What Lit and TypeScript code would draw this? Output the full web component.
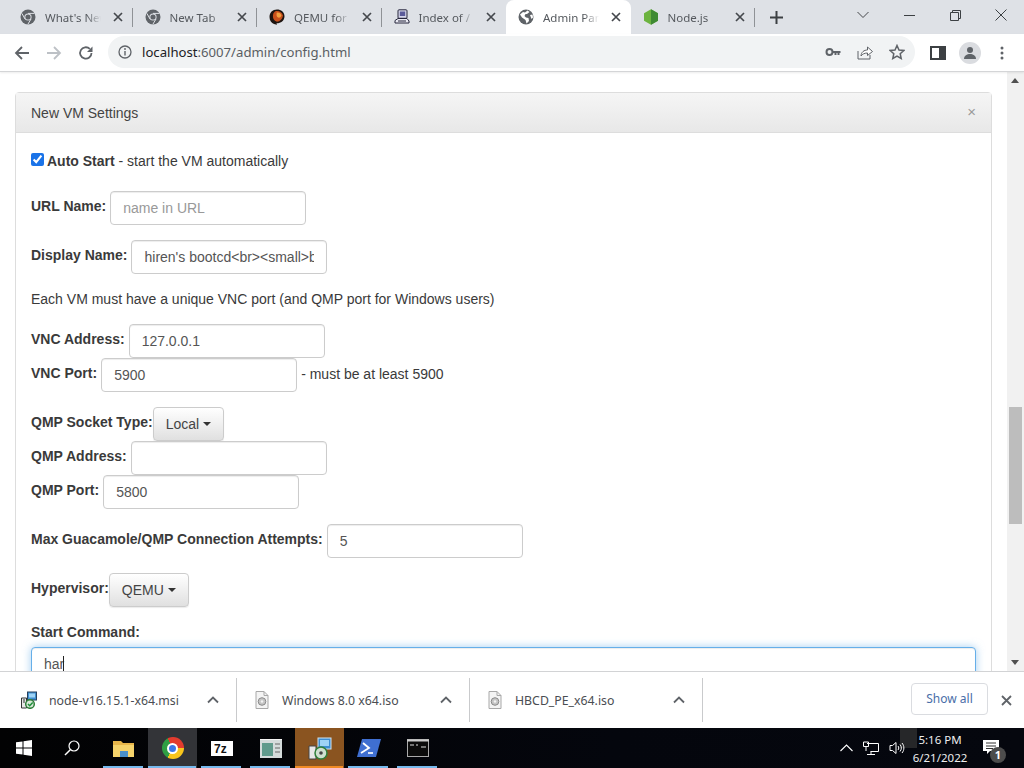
import { LitElement, html, css } from "lit";
import { customElement } from "lit/decorators.js";

const chromeGray = html`<svg class="fav" viewBox="0 0 16 16"><circle cx="8" cy="8" r="7.5" fill="#5f6368"/><path d="M8 4.4h6.4M5 10 1.9 4.4M11 10l-3.2 5.4" stroke="#dee1e6" stroke-width="1"/><circle cx="8" cy="8" r="3.6" fill="#dee1e6"/><circle cx="8" cy="8" r="2.6" fill="#5f6368"/></svg>`;
const qemu = html`<svg class="fav" viewBox="0 0 16 16"><path d="M8 .5C3.500.5.500 3.500.500 8c0 3.500 2 6 4.500 7l3 .8-.5-1.500c4 .2 8-2.500 8-7C15.500 3 12 .5 8 .5z" fill="#1d1410"/><path d="M7 2c3-.5 6 1 7 4.500-.5 3.500-3 6-6 6.200C5 12 3.500 9 4 6c.3-2 1.500-3.500 3-4z" fill="#c8501c"/><path d="M8 3.500c2-.2 4 1 4.500 3-.5 1.500-2 2.500-3.500 2C7.500 8 7 5 8 3.500z" fill="#f0a040"/></svg>`;
const indexIcon = html`<svg class="fav" viewBox="0 0 16 16"><rect x="4" y=".8" width="9" height="8.500" rx="1" fill="#d6d6ea" stroke="#26263c"/><rect x="5.800" y="2.500" width="5.400" height="4.500" fill="#5a5a9a"/><path d="M1 11.500 4 9.500h9l2 2.500v2H1z" fill="#e9e9f2" stroke="#26263c"/><path d="M4 12h8" stroke="#26263c"/></svg>`;
const globe = html`<svg class="fav" viewBox="0 0 16 16"><circle cx="8" cy="8" r="7.500" fill="#5f6368"/><path d="M2 5.500 5 3l2 .5L9.500 1.500 11.500 3 9 5H7.500L6.500 7l1.500 1.500 2.500.5.500 3-2.500 2.500-1-3.500L4 8.500z" fill="#fff"/><path d="m12 6 2.500-.5.500 3-1.500 1.500z" fill="#fff"/></svg>`;
const node = html`<svg class="fav" viewBox="0 0 16 16"><path d="M8 .3 15 4.200v7.600l-7 3.900-7-3.900V4.200z" fill="#6cb33f"/><path d="M8 .3 15 4.200v7.600l-7 3.900z" fill="#3f8a33"/></svg>`;
const xIcon = html`<svg class="tabx" viewBox="0 0 10 10"><path d="m1 1 8 8M9 1 1 9" stroke="#45484d" stroke-width="1.700"/></svg>`;

const tabs = [
  { t: "What's New", i: chromeGray },
  { t: "New Tab", i: chromeGray },
  { t: "QEMU for Windows", i: qemu },
  { t: "Index of /", i: indexIcon },
  { t: "Admin Panel", i: globe, active: true },
  { t: "Node.js", i: node },
];

const msi = html`<svg class="dl-icon" viewBox="0 0 18 18"><rect x="7.500" y="1" width="9" height="8" fill="#3e8ed0" stroke="#26405c"/><rect x="9" y="2.500" width="6" height="4" fill="#9ed3f5"/><path d="M1.500 7h5v10h-5z" fill="#e8e8e8" stroke="#333"/><path d="M3 9h2M3 11h2" stroke="#333"/><circle cx="10" cy="13" r="4.300" fill="#d8e8d8" stroke="#2f7f3a" stroke-width="1.500"/><path d="m8 13 1.700 1.700 3-3.200" stroke="#1d8f3a" stroke-width="1.500" fill="none"/></svg>`;
const iso = html`<svg class="dl-icon" viewBox="0 0 18 18"><path d="M3 .5h8L15 4.500V17.500H3z" fill="#f4f4f4" stroke="#a8a8a8"/><path d="M11 .5V4.500H15" fill="none" stroke="#a8a8a8"/><circle cx="9" cy="10.500" r="3.800" fill="#c6c6c6" stroke="#8a8a8a"/><circle cx="9" cy="10.500" r="1.200" fill="#f4f4f4"/></svg>`;
const caretUp = html`<svg class="chev" viewBox="0 0 12 8"><path d="m1 6.500 5-5 5 5" fill="none" stroke="#5f6368" stroke-width="1.800"/></svg>`;

@customElement("app-root")
export class AppRoot extends LitElement {
  static styles = css`
    :host { display: block; width: 1024px; height: 768px; overflow: hidden; font-family: "Liberation Sans", Arial, sans-serif; }
    .page { display: flex; flex-direction: column; height: 768px; background: #fff; }
    svg { display: block; flex: none; }

    .tabstrip { display: flex; align-items: stretch; height: 34px; flex: none; background: #dee1e6; padding-left: 8px; }
    .tab { width: 124.500px; flex: none; display: flex; align-items: center; padding: 0 10px 0 12px; box-sizing: border-box; position: relative; border-radius: 8px 8px 0 0; }
    .tab.sep::after { content: ""; position: absolute; right: 0; top: 8px; height: 19px; width: 1px; background: #8f9296; }
    .tab.active { background: #fff; }
    .fav { width: 16px; height: 16px; margin-right: 9px; }
    .tab-title { flex: 1; white-space: nowrap; overflow: hidden; font: 11.500px "Noto Sans", sans-serif; color: #55595e; -webkit-mask-image: linear-gradient(90deg, #000 70%, transparent 95%); mask-image: linear-gradient(90deg, #000 70%, transparent 95%); margin-right: 9px; }
    .tabx { width: 10px; height: 10px; flex: none; }
    .plus { width: 13px; height: 13px; margin: 10.500px 0 0 15px; }
    .winbtns { margin-left: auto; display: flex; }
    .winbtn { width: 46px; height: 30px; display: flex; align-items: center; justify-content: center; }

    .toolbar { height: 37px; flex: none; display: flex; align-items: center; background: #fff; border-bottom: 1px solid #d4d5d7; box-shadow: 0 1px 2px rgba(0,0,0,.08); position: relative; z-index: 1; padding-left: 14px; }
    .navbtn { width: 16px; height: 16px; margin-right: 16px; }
    .omni { width: 807px; height: 32px; margin-left: -2px; margin-top: -1px; background: #f1f3f4; border-radius: 16px; display: flex; align-items: center; padding: 0 10px; box-sizing: border-box; margin-right: 8px; }
    .info { width: 14px; height: 14px; margin: 0 10px 0 0; }
    .url { font: 13.150px "Noto Sans", sans-serif; color: #5a5e63; flex: 1; white-space: nowrap; padding-bottom: 1px; }
    .url b { font-weight: 400; color: #202124; }
    .omni-icons { display: flex; gap: 16px; align-items: center; }
    .omni-icons svg { width: 16px; height: 16px; }
    .side { width: 16px; height: 14px; margin-left: 7px; }
    .avatar { width: 22px; height: 22px; border-radius: 50%; background: #dadce0; margin-left: 13px; display: flex; align-items: center; justify-content: center; }
    .dots { width: 4px; height: 14px; margin-left: 19px; }

    .main { flex: 1; min-height: 0; display: flex; background: #fff; overflow: hidden; }
    .content { flex: 1; min-width: 0; padding: 20px 15px 0; overflow: hidden; }
    .scrollbar { width: 17px; flex: none; background: #f1f1f1; position: relative; }
    .sb-up, .sb-down { position: absolute; left: 4px; width: 0; height: 0; border-left: 4.500px solid transparent; border-right: 4.500px solid transparent; }
    .sb-up { top: 6px; border-bottom: 5px solid #505050; }
    .sb-down { bottom: 6px; border-top: 5px solid #505050; }
    .sb-thumb { position: absolute; left: 2px; right: 2px; top: 335px; height: 117px; background: #bdbdbd; }

    .panel { border: 1px solid #ddd; border-radius: 4px 4px 0 0; height: 700px; }
    .panel-head { height: 40px; box-sizing: border-box; padding: 0 15px; display: flex; align-items: center; justify-content: space-between; background: linear-gradient(#f5f5f5, #e8e8e8); border-bottom: 1px solid #ddd; font-size: 14px; color: #444; }
    .close-x { font-size: 15px; color: #9a9a9a; line-height: 1; position: relative; top: -1px; }
    .panel-body { padding: 19px 15px 0; color: #3a3a3a; font-size: 14px; line-height: 20px; }
    .check-row { display: flex; align-items: center; height: 15px; gap: 3px; }
    .check-text { margin-top: 2px; }
    .check { width: 13px; height: 13px; margin: 0; accent-color: #1a73e8; flex: none; }
    .row { display: flex; align-items: flex-start; height: 34px; gap: 4px; }
    .lbl { font-weight: 700; line-height: 20px; padding-top: 5px; white-space: nowrap; }
    .gap15 { margin-top: 15px; }
    .first { margin-top: 24px; }
    .input { width: 196px; height: 34px; box-sizing: border-box; margin: 0; padding: 6px 12px; border: 1px solid #ccc; border-radius: 4px; font: 14px "Liberation Sans", Arial, sans-serif; color: #555; background: #fff; box-shadow: inset 0 1px 1px rgba(0,0,0,.075); outline: none; }
    .input::placeholder { color: #999; opacity: 1; }
    .para { margin: 15px 0; height: 20px; }
    .note { padding-top: 6px; line-height: 20px; white-space: nowrap; }
    .dd { height: 34px; box-sizing: border-box; padding: 0 12px; display: flex; align-items: center; gap: 4px; border: 1px solid #ccc; border-radius: 4px; background: linear-gradient(#fff, #e0e0e0); box-shadow: 0 1px 1px rgba(0,0,0,.08); font-size: 14px; color: #444; margin-left: -4px; }
    .caret-dn { width: 0; height: 0; border-left: 4px solid transparent; border-right: 4px solid transparent; border-top: 4px solid #333; }
    .cmd-label { font-weight: 700; margin-top: 15px; height: 20px; }
    .cmd { position: relative; margin-top: 5px; }
    .cmd .input { width: 100%; border-color: #66afe9; box-shadow: inset 0 1px 1px rgba(0,0,0,.075), 0 0 8px rgba(102,175,233,.6); }
    .text-caret { position: absolute; left: 32px; top: 9px; width: 1px; height: 17px; background: #222; }

    .downloads { height: 57px; flex: none; box-sizing: border-box; display: flex; align-items: center; background: #fff; border-top: 1px solid #d2d3d5; position: relative; }
    .dl { width: 233px; height: 44px; box-sizing: border-box; display: flex; align-items: center; border-right: 1px solid #c9cacc; flex: none; padding-left: 16px; }
    .dl.lead { width: 237px; padding-left: 20px; }
    .dl-icon { width: 18px; height: 18px; margin-right: 11px; }
    .dl-name { font: 12.300px "Noto Sans", sans-serif; color: #4a4d52; flex: 1; white-space: nowrap; }
    .chev { width: 12px; height: 8px; margin-right: 17px; }
    .showall { margin-left: auto; width: 77px; height: 32px; box-sizing: border-box; border: 1px solid #dadce0; border-radius: 4px; display: flex; align-items: center; justify-content: center; font: 12px "Noto Sans", sans-serif; color: #4a6ea8; margin-top: -2px; padding-bottom: 2px; }
    .dl-close { width: 11px; height: 11px; margin: 0 12px 0 13px; }

    .taskbar { height: 40px; flex: none; display: flex; align-items: center; background: linear-gradient(90deg, #020203, #04060d 60%, #05070e); color: #fff; position: relative; }
    .tb { width: 48px; height: 40px; display: flex; align-items: center; justify-content: center; flex: none; box-sizing: border-box; }
    .app { width: 49px; position: relative; }
    .app.run::after { content: ""; position: absolute; left: 4px; right: 5px; bottom: 0; height: 2px; background: #76b9ed; }
    .app.hi { background: #333438; }
    .app.hi::after { left: 0; right: 1px; }
    .app.warm { background: #8a5420; }
    .app.warm::after { left: 0; right: 1px; background: #f08a24; }
    .spacer3 { width: 3px; flex: none; }
    .chrome { width: 22px; height: 22px; border-radius: 50%; background: conic-gradient(from 330deg, #e33b2e 0 120deg, #f8c51c 120deg 240deg, #2f9e44 240deg 360deg); display: flex; align-items: center; justify-content: center; }
    .chrome i { display: block; width: 11px; height: 11px; box-sizing: border-box; border-radius: 50%; background: #3b78e7; border: 2px solid #fff; }
    .ghost { position: absolute; left: 900px; top: 0; width: 17px; height: 20px; background: #262729; }
    .tray { margin-left: auto; display: flex; align-items: center; position: relative; }
    .tray-ic { margin-right: 10px; }
    .clock { width: 62px; text-align: center; font: 11.500px/18px "Noto Sans", sans-serif; color: #eee; margin: 2px 12px 0 4px; white-space: nowrap; }
    .notif { position: relative; width: 16px; height: 16px; margin-right: 25px; }
    .badge { position: absolute; left: 7px; top: 7px; width: 16px; height: 16px; border-radius: 50%; background: #4c4c4c; color: #fff; font: 700 11px/16px "Noto Sans", sans-serif; text-align: center; }
  `;

  render() {
    return html`<div class="page">
      ${this.renderTabs()}
      ${this.renderToolbar()}
      <div class="main">
        <div class="content">${this.renderPanel()}</div>
        <div class="scrollbar"><div class="sb-up"></div><div class="sb-thumb"></div><div class="sb-down"></div></div>
      </div>
      ${this.renderDownloads()}
      ${this.renderTaskbar()}
    </div>`;
  }

  renderTabs() {
    return html`<div class="tabstrip">
      ${tabs.map((t, i) => html`<div class="tab ${t.active ? "active" : ""} ${!t.active && i !== 3 ? "sep" : ""}">${t.i}<span class="tab-title">${t.t}</span>${xIcon}</div>`)}
      <svg class="plus" viewBox="0 0 13 13"><path d="M6.500 0v13M0 6.500h13" stroke="#3c4043" stroke-width="2"/></svg>
      <div class="winbtns">
        <div class="winbtn"><svg width="12" height="8" viewBox="0 0 12 8"><path d="m.5 1 5.500 5.500L11.500 1" fill="none" stroke="#44474b"/></svg></div>
        <div class="winbtn"><svg width="11" height="1" viewBox="0 0 11 1"><path d="M0 .5h11" stroke="#3c4043"/></svg></div>
        <div class="winbtn"><svg width="11" height="11" viewBox="0 0 11 11"><path d="M.5 2.500h8v8h-8zM2.500 2.500v-2h8v8h-2" fill="none" stroke="#3c4043"/></svg></div>
        <div class="winbtn"><svg width="12" height="12" viewBox="0 0 12 12"><path d="m.5.500 11 11M11.500.500l-11 11" stroke="#3c4043"/></svg></div>
      </div>
    </div>`;
  }

  renderToolbar() {
    return html`<div class="toolbar">
      <svg class="navbtn" viewBox="0 0 16 16"><path d="M15 8H2M8 2 2 8l6 6" fill="none" stroke="#5f6368" stroke-width="1.800"/></svg>
      <svg class="navbtn" viewBox="0 0 16 16"><path d="M1 8h13M8 2l6 6-6 6" fill="none" stroke="#bdc1c6" stroke-width="1.800"/></svg>
      <svg class="navbtn" viewBox="0 0 16 16"><path d="M13.500 8A5.700 5.700 0 1 1 11.800 3.900" fill="none" stroke="#5f6368" stroke-width="1.800"/><path d="M14.500 1.500v5.500H9z" fill="#5f6368"/></svg>
      <div class="omni">
        <svg class="info" viewBox="0 0 14 14"><circle cx="7" cy="7" r="6" fill="none" stroke="#5f6368" stroke-width="1.300"/><path d="M7 6v4.500" stroke="#5f6368" stroke-width="1.400"/><circle cx="7" cy="4" r=".9" fill="#5f6368"/></svg>
        <div class="url"><b>localhost</b>:6007/admin/config.html</div>
        <div class="omni-icons">
          <svg viewBox="0 0 16 16"><circle cx="4.500" cy="8" r="3" fill="none" stroke="#5f6368" stroke-width="2"/><path d="M7.500 7h8v2h-1v2h-2V9h-1v2h-2V9h-2z" fill="#5f6368"/></svg>
          <svg viewBox="0 0 16 16"><path d="M1 7v8h12v-4" fill="none" stroke="#5f6368"/><path d="M4 12c.3-4 3-6 6.500-6V3l5 4.500-5 4V9C7.500 9 5.500 10 4 12z" fill="#fff" stroke="#5f6368"/></svg>
          <svg viewBox="0 0 16 16"><path d="m8 1.500 2 4.500 4.800.5-3.600 3.200 1 4.800L8 12l-4.200 2.500 1-4.800L1.200 6.500 6 6z" fill="none" stroke="#5f6368" stroke-width="1.500"/></svg>
        </div>
      </div>
      <svg class="side" viewBox="0 0 16 14"><rect x="1" y="1" width="14" height="12" fill="none" stroke="#3c4043" stroke-width="2"/><rect x="9" y="1" width="6" height="12" fill="#3c4043"/></svg>
      <div class="avatar"><svg width="14" height="14" viewBox="0 0 14 14"><circle cx="7" cy="4" r="3" fill="#5f6368"/><path d="M1 13c0-3.500 3-5 6-5s6 1.500 6 5z" fill="#5f6368"/></svg></div>
      <svg class="dots" viewBox="0 0 4 14"><circle cx="2" cy="2" r="1.500" fill="#5f6368"/><circle cx="2" cy="7" r="1.500" fill="#5f6368"/><circle cx="2" cy="12" r="1.500" fill="#5f6368"/></svg>
    </div>`;
  }

  renderPanel() {
    const display = "hiren's bootcd<br><small>bootable</small>";
    return html`<div class="panel">
      <div class="panel-head"><span>New VM Settings</span><span class="close-x">×</span></div>
      <div class="panel-body">
        <div class="check-row"><input class="check" type="checkbox" checked /><span class="check-text"><strong>Auto Start</strong> - start the VM automatically</span></div>
        <div class="row first"><span class="lbl">URL Name:</span><input class="input" placeholder="name in URL" /></div>
        <div class="row gap15"><span class="lbl">Display Name:</span><input class="input" .value=${display} /></div>
        <div class="para">Each VM must have a unique VNC port (and QMP port for Windows users)</div>
        <div class="row"><span class="lbl">VNC Address:</span><input class="input" value="127.0.0.1" /></div>
        <div class="row"><span class="lbl">VNC Port:</span><input class="input" value="5900" /><span class="note">- must be at least 5900</span></div>
        <div class="row gap15"><span class="lbl">QMP Socket Type:</span><div class="dd">Local <span class="caret-dn"></span></div></div>
        <div class="row"><span class="lbl">QMP Address:</span><input class="input" /></div>
        <div class="row"><span class="lbl">QMP Port:</span><input class="input" value="5800" /></div>
        <div class="row gap15"><span class="lbl">Max Guacamole/QMP Connection Attempts:</span><input class="input" value="5" /></div>
        <div class="row gap15"><span class="lbl">Hypervisor:</span><div class="dd">QEMU <span class="caret-dn"></span></div></div>
        <div class="cmd-label">Start Command:</div>
        <div class="cmd"><input class="input" value="har" /><span class="text-caret"></span></div>
      </div>
    </div>`;
  }

  renderDownloads() {
    return html`<div class="downloads">
      <div class="dl lead">${msi}<span class="dl-name">node-v16.15.1-x64.msi</span>${caretUp}</div>
      <div class="dl">${iso}<span class="dl-name">Windows 8.0 x64.iso</span>${caretUp}</div>
      <div class="dl">${iso}<span class="dl-name">HBCD_PE_x64.iso</span>${caretUp}</div>
      <div class="showall">Show all</div>
      <svg class="dl-close" viewBox="0 0 11 11"><path d="m1 1 9 9M10 1l-9 9" stroke="#5f6368" stroke-width="1.800"/></svg>
    </div>`;
  }

  renderTaskbar() {
    return html`<div class="taskbar">
      <div class="tb"><svg width="16" height="16" viewBox="0 0 16 16"><path d="M0 2.300 6.500 1.400V7.500H0zM7.500 1.200 16 0V7.500H7.500zM0 8.500H6.500V14.600L0 13.700zM7.500 8.500H16V16L7.500 14.800z" fill="#fff"/></svg></div>
      <div class="tb"><svg width="16" height="16" viewBox="0 0 16 16"><circle cx="10" cy="6" r="5" fill="none" stroke="#fff" stroke-width="1.200"/><path d="M6.300 9.700 1 15" stroke="#fff" stroke-width="1.500"/></svg></div>
      <div class="spacer3"></div>
      <div class="tb app run"><svg width="22" height="19" viewBox="0 0 22 19"><path d="M0 2h8l2 2h11v14H0z" fill="#e8b64a"/><path d="M0 6h21v12H0z" fill="#f6d36b"/><path d="M7 12h8v6H7z" fill="#4a8fc9"/></svg></div>
      <div class="tb app run hi"><div class="chrome"><i></i></div></div>
      <div class="tb app run"><svg width="22" height="15" viewBox="0 0 22 15"><rect width="22" height="15" fill="#fff"/><text x="3" y="12" font-family="Liberation Sans" font-weight="700" font-size="12" fill="#111">7z</text></svg></div>
      <div class="tb app run"><svg width="22" height="19" viewBox="0 0 22 19"><rect width="22" height="19" fill="#d4dbdb"/><rect x="2" y="4" width="11" height="13" fill="#5f9a8c"/><path d="M15 5h5M15 9h5M15 13h5" stroke="#666"/><path d="M0 .5h22" stroke="#f4f4f4"/></svg></div>
      <div class="tb app run warm"><svg width="24" height="24" viewBox="0 0 24 24"><rect x="10" y="2" width="13" height="11" fill="#3e8ed0" stroke="#cfe3f0"/><rect x="12" y="4" width="9" height="6" fill="#9ed3f5"/><path d="M1 10h7v13H1z" fill="#e8e8e8" stroke="#444"/><circle cx="13" cy="17" r="6" fill="#cfe0cf" stroke="#2f7f3a" stroke-width="1.500"/><circle cx="13" cy="17" r="1.800" fill="#444"/></svg></div>
      <div class="tb app run"><svg width="24" height="18" viewBox="0 0 24 18"><path d="M5 0h19l-5 18H0z" fill="#3f6fd1"/><path d="m6 4 6 5-8 5" fill="none" stroke="#fff" stroke-width="1.800"/><path d="M11 14h5" stroke="#fff" stroke-width="1.600"/></svg></div>
      <div class="tb app run"><svg width="22" height="18" viewBox="0 0 22 18"><rect x=".5" y=".5" width="21" height="17" fill="#0b0b0b" stroke="#aaa"/><path d="M0 1.500h22" stroke="#ccc" stroke-width="2"/><path d="M3 6h4M9 6h2M14 8h5" stroke="#ddd"/></svg></div>
      <div class="ghost"></div>
      <div class="tray">
        <svg class="tray-ic" width="13" height="8" viewBox="0 0 13 8"><path d="m.5 7 6-6 6 6" fill="none" stroke="#fff" stroke-width="1.100"/></svg>
        <svg class="tray-ic" width="16" height="14" viewBox="0 0 16 14"><path d="M4 2.500h11.500v8H7.500M.5 1h5v4.500h-5zM3 5.500V10M8 10.500v3M4 13.500h8" fill="none" stroke="#fff"/></svg>
        <svg width="16" height="14" viewBox="0 0 16 14"><path d="M1 4.500h2.500L7 1.500v11l-3.500-3H1z" fill="none" stroke="#fff"/><path d="M9 5c1 1.200 1 2.800 0 4M11 3.500c1.800 2 1.800 5 0 7M13 2c2.500 3 2.500 7 0 10" fill="none" stroke="#fff"/></svg>
        <div class="clock">5:16 PM<br />6/21/2022</div>
        <div class="notif"><svg width="16" height="14" viewBox="0 0 16 14"><path d="M0 0h16v11H7l-3 3v-3H0z" fill="#fff"/><path d="M3 3h10M3 6h10M3 8.500h7" stroke="#333"/></svg><span class="badge">1</span></div>
      </div>
    </div>`;
  }
}
